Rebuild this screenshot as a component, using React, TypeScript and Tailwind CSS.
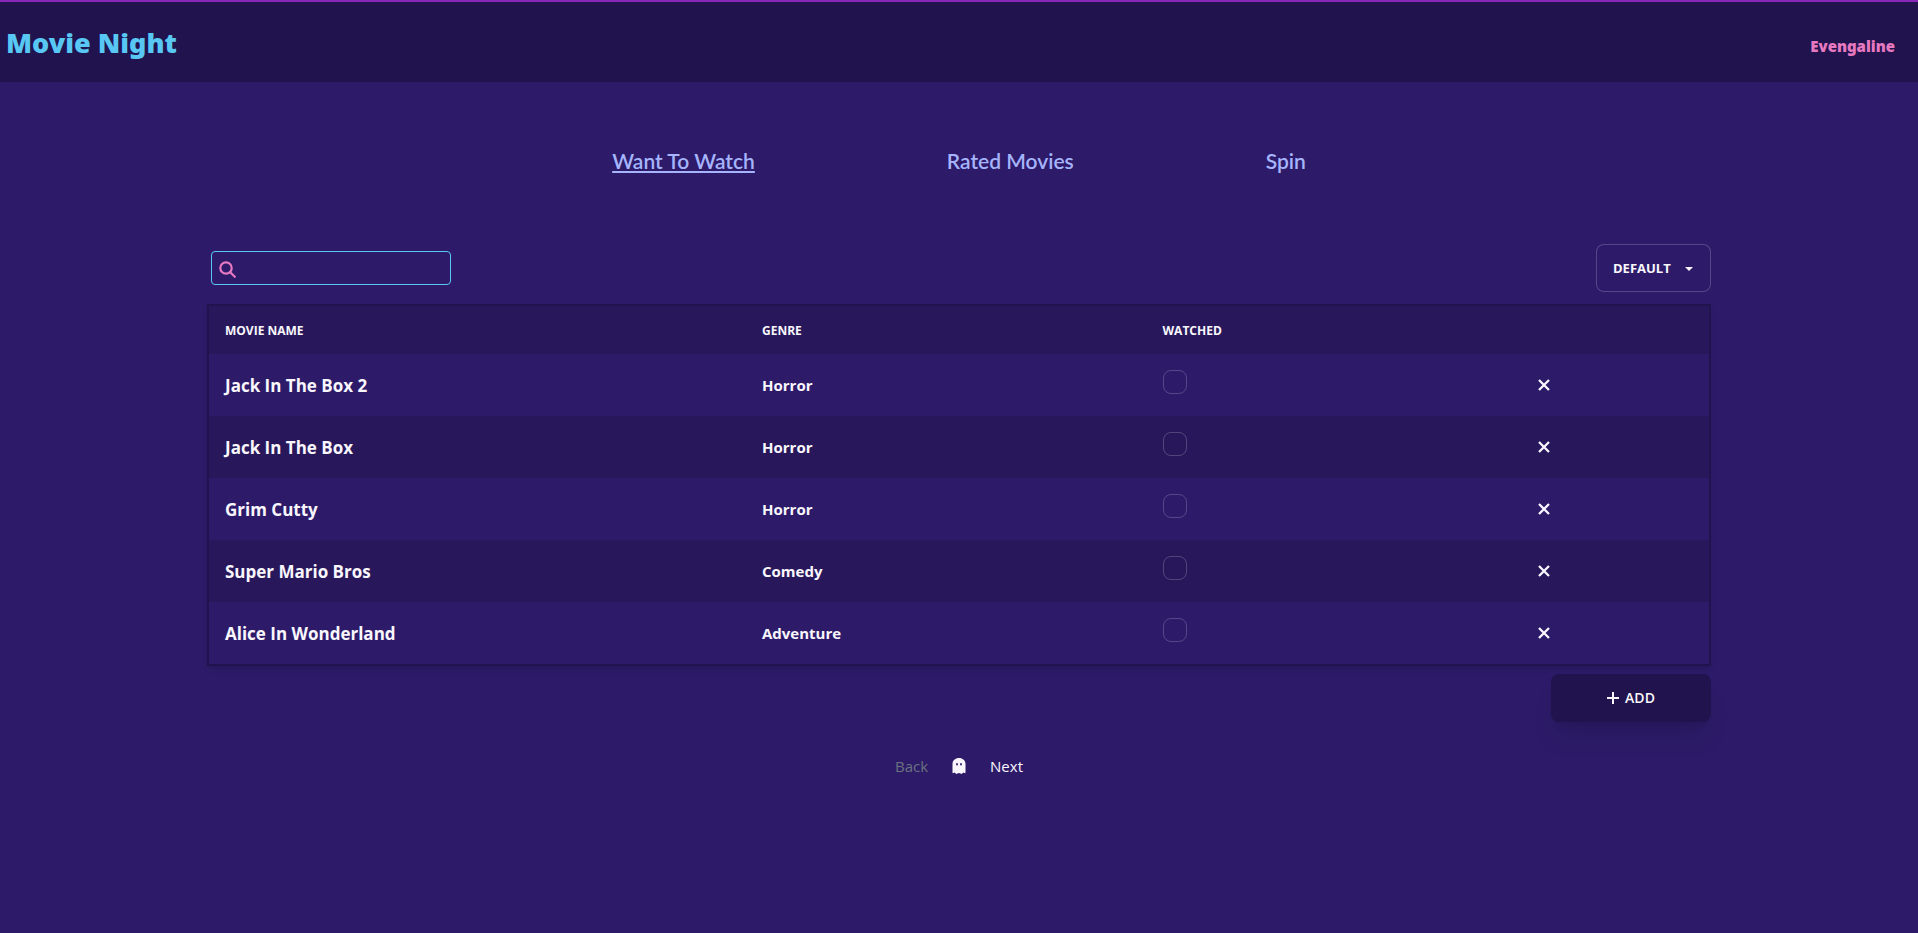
const tabs = ["Want To Watch", "Rated Movies", "Spin"];

const movies = [
  { name: "Jack In The Box 2", genre: "Horror" },
  { name: "Jack In The Box", genre: "Horror" },
  { name: "Grim Cutty", genre: "Horror" },
  { name: "Super Mario Bros", genre: "Comedy" },
  { name: "Alice In Wonderland", genre: "Adventure" },
];

function GhostIcon() {
  return (
    <svg viewBox="0 0 14 16" className="h-4 w-3.5" aria-hidden="true">
      <path
        fill="currentColor"
        fillRule="evenodd"
        d="M7 0C3.400 0 .5 2.500 .5 6V14.600c0 .6.500.8 1 .5l1.100-.5 1.400 1.200c.3.200.6.200.8 0L7 15l2.200.8c.2.200.5.200.8 0l1.400-1.200 1.100.5c.5.300 1 .1 1-.5V6C13.500 2.500 10.600 0 7 0ZM5 5a.9.9 0 0 1 .9.9v.7a.9.9 0 0 1-1.800 0v-.7A.9.9 0 0 1 5 5Zm4 0a.9.9 0 0 1 .9.9v.7a.9.9 0 0 1-1.800 0v-.7A.9.9 0 0 1 9 5Z"
      />
    </svg>
  );
}

function Header() {
  return (
    <header className="flex h-[82px] items-center justify-between border-t-2 border-[#8a27b8] bg-[#20134e] pr-[23px] pl-1.5">
      <a href="#home" className="pt-0.5 font-['Noto_Sans',sans-serif] text-[27px] leading-8 font-black text-[#58c7f3]">
        Movie Night
      </a>
      <a href="#profile" className="pt-2 font-['Noto_Sans',sans-serif] text-[15px] leading-6 font-black text-[#e779c1]">
        Evengaline
      </a>
    </header>
  );
}

function Tabs() {
  return (
    <nav className="mt-[65px] flex justify-center gap-48 font-['Lato',sans-serif] text-[21px] leading-7 font-semibold text-[#a5b4fc]">
      {tabs.map((tab, i) => (
        <a key={tab} href="#tab" className={i === 0 ? "underline decoration-2 underline-offset-2" : ""}>
          {tab}
        </a>
      ))}
    </nav>
  );
}

function MovieTable() {
  return (
    <div className="border-2 border-[#20134e] shadow-md">
      <table className="w-full table-fixed border-collapse text-left">
        <thead>
          <tr className="h-12 bg-[#28185b] text-xs font-bold">
            <th className="w-[35.8%] px-4 pt-0.5">MOVIE NAME</th>
            <th className="w-[26.7%] px-4 pt-0.5">GENRE</th>
            <th className="w-[25%] px-4 pt-0.5">WATCHED</th>
            <th className="w-[12.5%] px-4" aria-label="Remove" />
          </tr>
        </thead>
        <tbody>
          {movies.map((movie) => (
            <tr key={movie.name} className="h-[62px] even:bg-[#28185b]">
              <td className="px-4 pt-0.5 text-[17px] font-bold">{movie.name}</td>
              <td className="px-4 text-[15px] font-bold">{movie.genre}</td>
              <td className="px-4">
                <input
                  type="checkbox"
                  aria-label={`Watched ${movie.name}`}
                  className="mb-1.5 block h-6 w-6 appearance-none rounded-lg border border-[#f9f7fd]/20 checked:bg-[#e779c1]"
                />
              </td>
              <td className="px-4">
                <button type="button" aria-label={`Remove ${movie.name}`} className="block">
                  <svg viewBox="0 0 12 12" className="h-3 w-3" fill="none" stroke="currentColor" strokeWidth="2.300">
                    <path d="M1 1l10 10M11 1L1 11" />
                  </svg>
                </button>
              </td>
            </tr>
          ))}
        </tbody>
      </table>
    </div>
  );
}

export default function App() {
  return (
    <div className="min-h-screen bg-[#2d1b69] font-['Open_Sans',sans-serif] text-[#f9f7fd]">
      <Header />
      <Tabs />
      <main className="mx-auto mt-[69px] w-full max-w-[1504px]">
        <div className="mb-3 flex items-center justify-between">
          <label className="ml-1 flex h-[34px] w-60 items-center gap-2 rounded border border-[#58c7f3] px-[7px]">
            <svg viewBox="0 0 17 17" className="mt-0.5 h-[17px] w-[17px] shrink-0 text-[#e779c1]" fill="none" stroke="currentColor" strokeWidth="2.200">
              <circle cx="7" cy="7" r="5.700" />
              <path d="M11.200 11.200l4.600 4.600" strokeLinecap="round" />
            </svg>
            <input type="search" aria-label="Search movies" className="w-full bg-transparent outline-none" />
          </label>
          <div className="relative">
            <select
              aria-label="Sort order"
              className="block h-12 w-[115px] appearance-none rounded-lg border border-[#f9f7fd]/20 bg-[#2d1b69] pt-0.5 pl-4 text-[13px] font-bold"
            >
              <option>DEFAULT</option>
              <option>NAME</option>
              <option>GENRE</option>
            </select>
            <svg viewBox="0 0 8 4" className="pointer-events-none absolute top-[23px] right-[18px] h-1 w-2" fill="currentColor">
              <path d="M0 0h8L4 4z" />
            </svg>
          </div>
        </div>
        <MovieTable />
        <div className="mt-2 flex justify-end">
          <button
            type="button"
            className="flex h-12 w-40 items-center justify-center gap-1.5 rounded-lg bg-[#20134e] text-sm font-semibold shadow-xl"
          >
            <svg viewBox="0 0 12 12" className="h-3 w-3" fill="none" stroke="currentColor" strokeWidth="2">
              <path d="M6 0v12M0 6h12" />
            </svg>
            ADD
          </button>
        </div>
        <div className="mt-8 flex items-center justify-center gap-6 text-[15px] leading-6">
          <button type="button" disabled className="text-[#6b7280]">Back</button>
          <GhostIcon />
          <button type="button">Next</button>
        </div>
      </main>
    </div>
  );
}
